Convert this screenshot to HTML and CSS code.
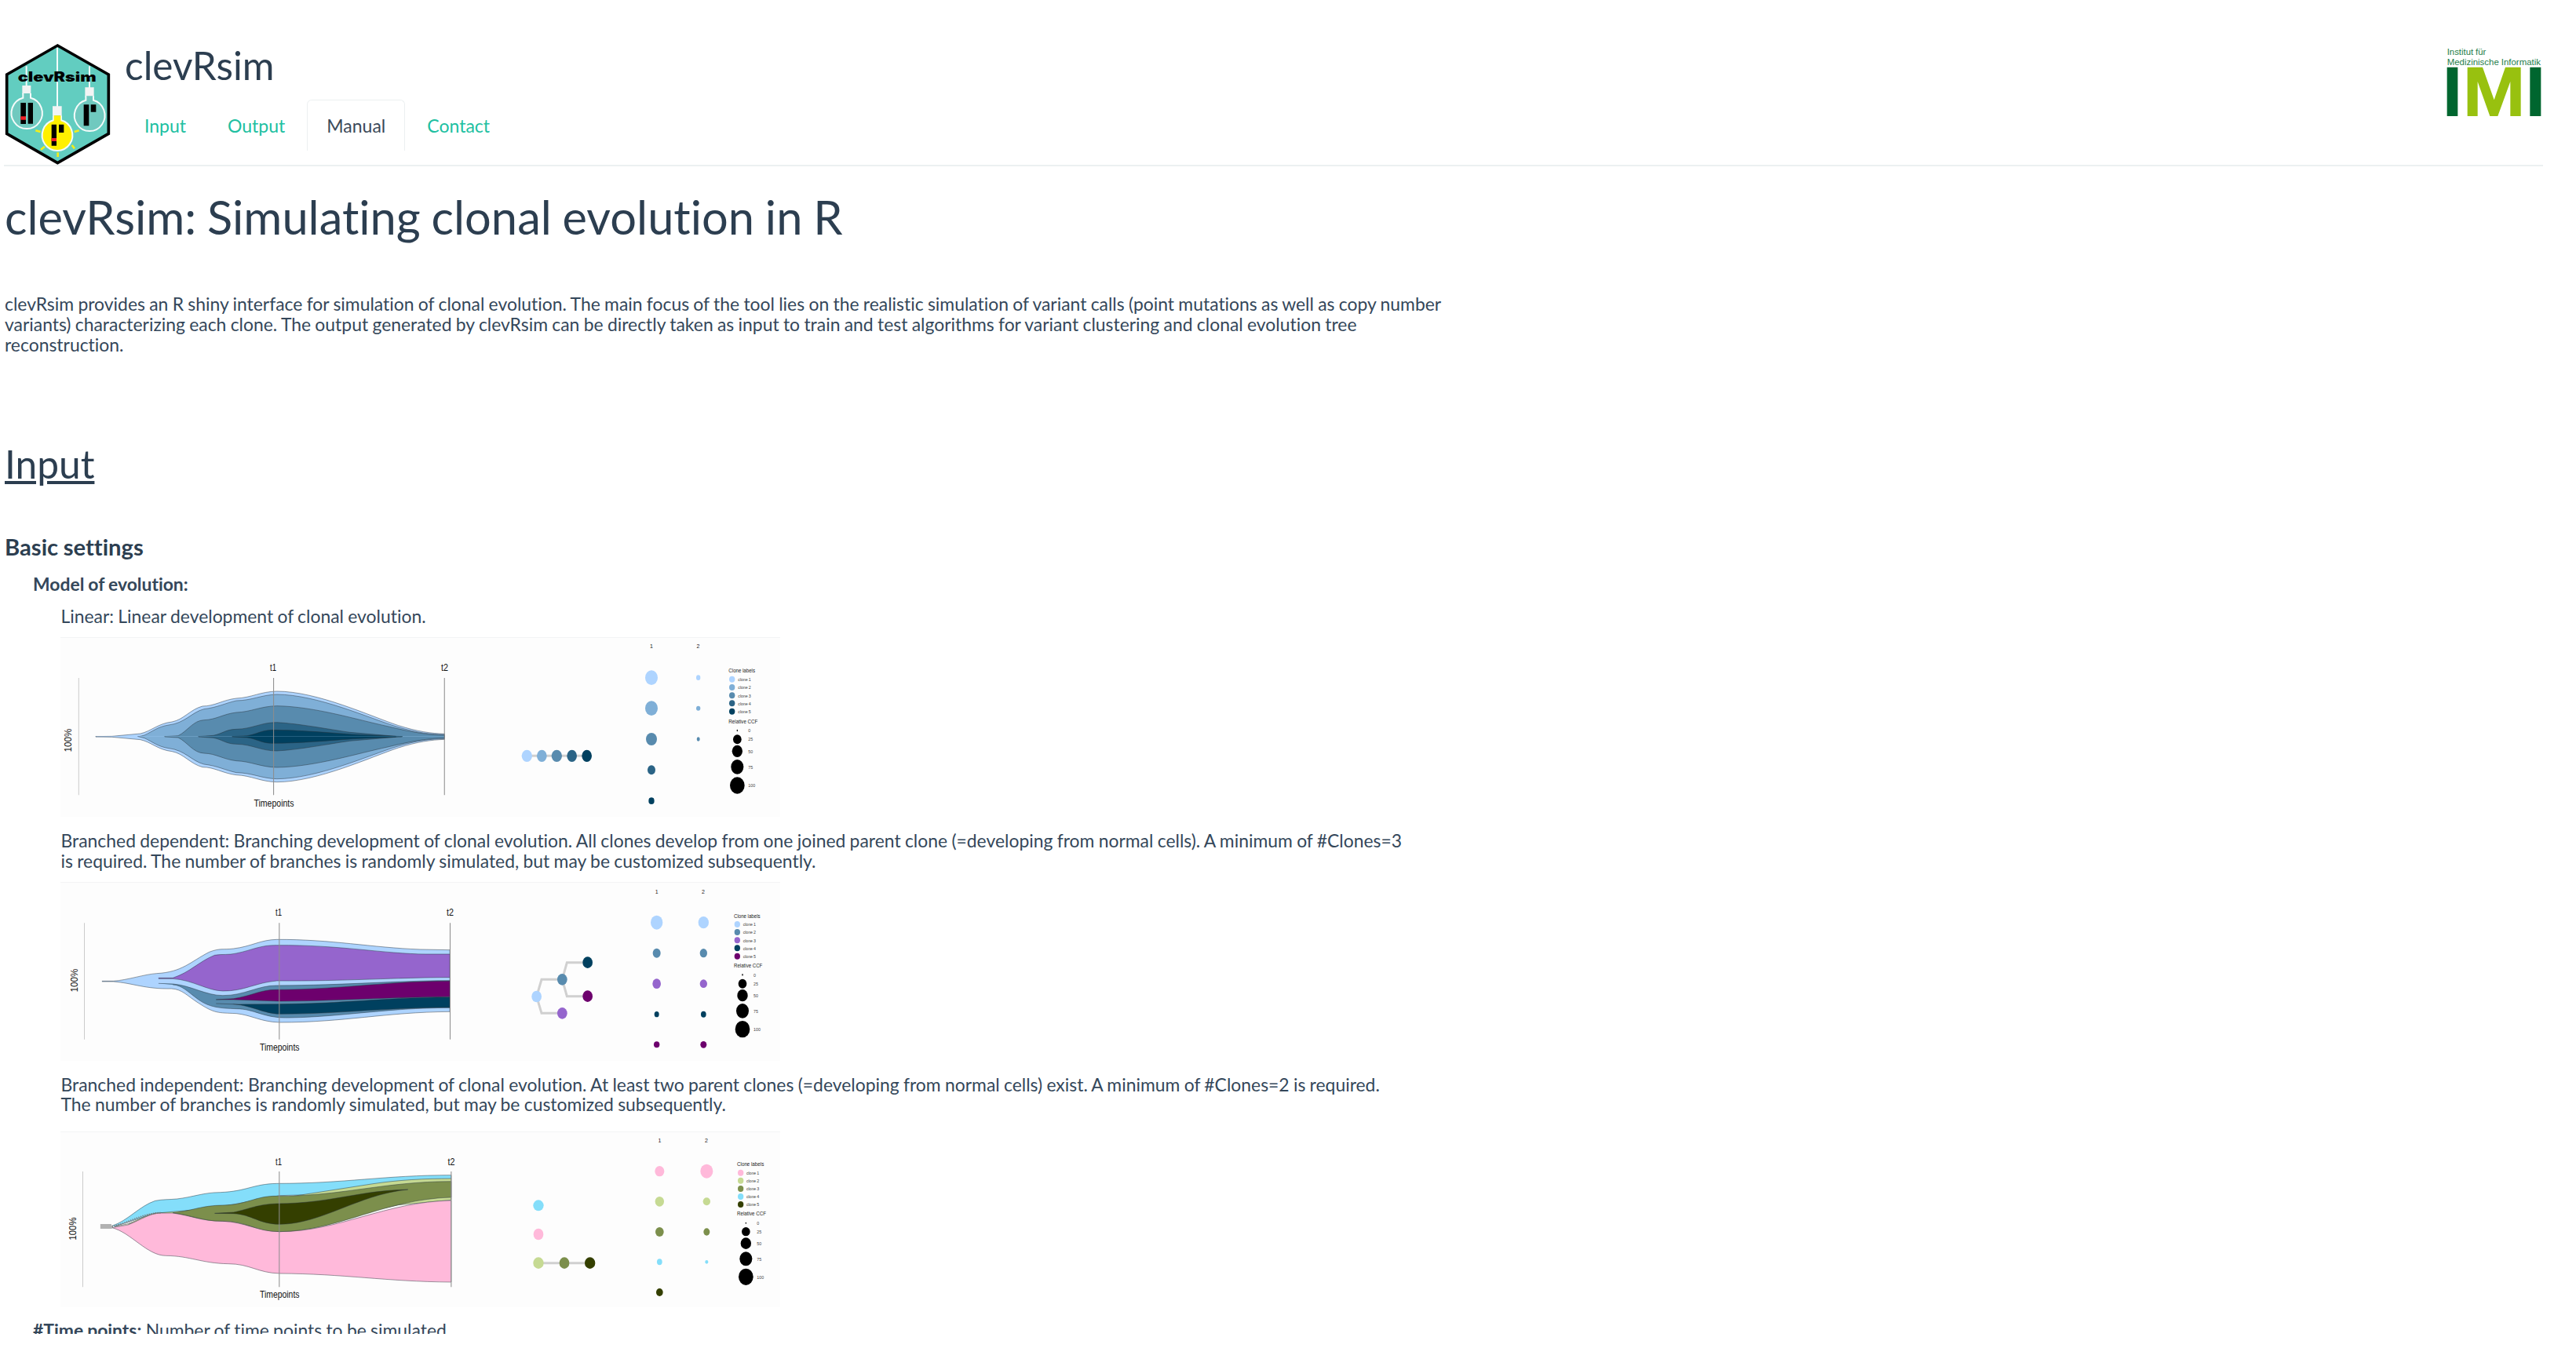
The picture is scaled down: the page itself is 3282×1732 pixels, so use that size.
FILE: index.html
```
<!DOCTYPE html>
<html lang="en">
<head>
<meta charset="utf-8">
<title>clevRsim</title>
<link rel="stylesheet" href="styles.css">
</head>
<body>
<div class="page">
<header class="header">
  <svg class="logo" viewBox="15 42 411 468" role="img" aria-label="clevRsim logo">
    <path d="M220 54 L415 165 V391 L220 503 L26 391 V165 Z" fill="#62cdc0" stroke="#000" stroke-width="11"/>
    <g stroke="#f4fbfa" stroke-width="6" fill="none">
      <path d="M101 133V210M219 62V290M342 133V218"/>
    </g>
    <g fill="#f2f4f4">
      <path d="M85 207h33v32H85zM325 214h34v36H325zM201 286h35v36H201z"/>
    </g>
    <g stroke="#f4fbfa" stroke-width="6">
      <path d="M88 237 V254 A59 60 0 1 0 117 254 V237" fill="#70c9bf"/>
      <path d="M328 247 V263 A58 60 0 1 0 357 263 V247" fill="#70c9bf"/>
      <path d="M204 322 V340 A58 59 0 1 0 234 340 V322" fill="#fff000"/>
    </g>
    <path d="M206 324h26v22h-26z" fill="#fff000"/>
    <path d="M79 273h20v81H79zM107 273h19v80h-19zM320 280h20v81h-20zM347 280h20v28h-20zM197 356h19v81h-19zM225 356h19v31h-19z" fill="#000"/>
    <path d="M79 325h20v13H79zM197 408h19v12h-19z" fill="#f02026"/>
    <path d="M136 379l19 5M302 379l-18 5M156 452l15-12M285 448l-10-13M221 463v17" stroke="#f2ee1b" stroke-width="8"/>
    <text class="logo-name" x="68" y="191" textLength="300" lengthAdjust="spacingAndGlyphs">clevRsim</text>
  </svg>
  <div class="brand">
    <h2 class="brand-title">clevRsim</h2>
    <nav class="tabs">
      <a class="tab">Input</a>
      <a class="tab">Output</a>
      <a class="tab tab-active">Manual</a>
      <a class="tab">Contact</a>
    </nav>
  </div>
  <svg class="imi" viewBox="108 60 372 270" role="img" aria-label="Institut für Medizinische Informatik">
    <text x="113" y="90" textLength="149" lengthAdjust="spacingAndGlyphs">Institut für</text>
    <text x="113" y="128" textLength="358" lengthAdjust="spacingAndGlyphs">Medizinische Informatik</text>
    <path d="M113 137h41v187h-41zM430 137h42v187h-42z" fill="#00662f"/>
    <path d="M191 324V137H249L293 262L336 137H395V324H355V192L307 324H277L230 192V324Z" fill="#98c10f"/>
  </svg>
</header>

<main class="manual">
  <h1>clevRsim: Simulating clonal evolution in R</h1>
  <p class="intro">clevRsim provides an R shiny interface for simulation of clonal evolution. The main focus of the tool lies on the realistic simulation of variant calls (point mutations as well as copy number<br>variants) characterizing each clone. The output generated by clevRsim can be directly taken as input to train and test algorithms for variant clustering and clonal evolution tree<br>reconstruction.</p>
  <h2 class="section">Input</h2>
  <h4>Basic settings</h4>
  <p class="setting"><b>Model of evolution:</b></p>

  <div class="models">
  <p>Linear: Linear development of clonal evolution.</p>
  <svg class="figure fig-linear" viewBox="77 813 917 228">
    <g transform="translate(60 800) scale(.34439 .33333)">
      <path d="M117 192V640" class="axis-light"/>
      <g id="linear-half" class="edge">
        <path fill="#aed4ff" d="M180 417.5V416L240 415L345 405C385 396 410 366 462 360C505 352 530 312 575 300C620 300 650 276 700 270C755 268 790 244 850 243C1000 243 1200 340 1300 374C1370 397 1420 404 1470 406V417.5"/>
        <path fill="#7fafd7" d="M335 417.5L360 411C390 397 410 378 450 372C510 365 535 323 580 311C630 305 660 288 700 279C760 278 790 257 850 255C1000 256 1190 345 1295 379C1370 402 1420 408 1470 408V417.5"/>
        <path fill="#588bae" d="M435 417.5V416L485 413C520 395 540 355 580 353C625 352 650 330 700 324C755 322 790 300 850 299C990 301 1150 353 1260 377C1350 400 1410 410 1470 411V417.5"/>
        <path fill="#2b6486" d="M560 417.5V416L615 412C650 405 660 389 700 388C760 387 790 362 850 362C930 366 1050 390 1120 400L1290 415V417.5"/>
        <path fill="#00405f" d="M685 417.5V416L740 413C775 408 790 393 830 391C930 391 1050 402 1130 408L1314 416V417.5"/>
      </g>
      <use href="#linear-half" transform="matrix(1 0 0 -1 0 833)"/>
      <path d="M838 192V640M1470 192V640" class="axis"/>
    </g>
    <g class="chart-label">
      <text x="344" y="855" textLength="8" lengthAdjust="spacingAndGlyphs">t1</text><text x="562" y="855" textLength="9" lengthAdjust="spacingAndGlyphs">t2</text>
      <text x="323.500" y="1028" textLength="51" lengthAdjust="spacingAndGlyphs">Timepoints</text>
      <text transform="translate(91 958.500) rotate(-90)" textLength="30" lengthAdjust="spacingAndGlyphs">100%</text>
    </g>
    <g transform="translate(600 800) scale(.33333)">
      <path class="branch" d="M214 490H443"/>
      <ellipse cx="214" cy="490" rx="20" ry="23" fill="#aed4ff"/><ellipse cx="271" cy="490" rx="19" ry="23" fill="#7fafd7"/><ellipse cx="328" cy="490" rx="20" ry="23" fill="#588bae"/><ellipse cx="386" cy="490" rx="19" ry="23" fill="#2b6486"/><ellipse cx="443" cy="490" rx="19" ry="23" fill="#00405f"/>
      <ellipse cx="690" cy="191" rx="24" ry="28" fill="#aed4ff"/><ellipse cx="690" cy="308" rx="24" ry="28" fill="#7fafd7"/><ellipse cx="690" cy="426" rx="21" ry="24" fill="#588bae"/><ellipse cx="690" cy="544" rx="15" ry="18" fill="#2b6486"/><ellipse cx="690" cy="662" rx="11" ry="13" fill="#00405f"/>
      <ellipse cx="869" cy="191" rx="8" ry="10" fill="#aed4ff"/><ellipse cx="869" cy="308" rx="8" ry="9" fill="#7fafd7"/><ellipse cx="869" cy="426" rx="6" ry="8" fill="#588bae"/>
      <g class="legend">
        <text class="col" x="690" y="79">1</text><text class="col" x="868" y="79">2</text>
        <text x="985" y="172" textLength="101" lengthAdjust="spacingAndGlyphs">Clone labels</text>
        <text x="985" y="365" textLength="111" lengthAdjust="spacingAndGlyphs">Relative CCF</text>
        <g class="small">
          <text x="1021" y="205" textLength="49">clone 1</text><text x="1021" y="235" textLength="49">clone 2</text><text x="1021" y="266" textLength="49">clone 3</text><text x="1021" y="296" textLength="49">clone 4</text><text x="1021" y="327" textLength="49">clone 5</text>
          <text x="1060" y="400">0</text><text x="1060" y="433">25</text><text x="1060" y="479">50</text><text x="1060" y="541">75</text><text x="1060" y="610">100</text>
        </g>
      </g>
      <ellipse cx="998" cy="197" rx="11" ry="12" fill="#aed4ff"/><ellipse cx="998" cy="228" rx="11" ry="12" fill="#7fafd7"/><ellipse cx="998" cy="259" rx="11" ry="12" fill="#588bae"/><ellipse cx="998" cy="289" rx="11" ry="12" fill="#2b6486"/><ellipse cx="998" cy="320" rx="11" ry="12" fill="#00405f"/>
      <ellipse cx="1018" cy="393" rx="2" ry="4"/><ellipse cx="1018" cy="427" rx="16" ry="18"/><ellipse cx="1018" cy="472" rx="20" ry="23"/><ellipse cx="1018" cy="532" rx="24" ry="28"/><ellipse cx="1018" cy="603" rx="28" ry="32"/>
    </g>
  </svg>

  <p>Branched dependent: Branching development of clonal evolution. All clones develop from one joined parent clone (=developing from normal cells). A minimum of #Clones=3<br>is required. The number of branches is randomly simulated, but may be customized subsequently.</p>
  <svg class="figure fig-dependent" viewBox="77 1126 917 227">
    <g transform="translate(60 1110) scale(.34439 .33333)">
      <path d="M138 202V647" class="axis-light"/>
      <g class="edge">
        <path fill="#aed4ff" d="M203 424H245C300 420 360 398 405 395C500 390 530 350 600 313C640 297 650 305 690 300C755 292 790 266 850 265C1050 264 1200 296 1380 303L1490 305V541C1250 543 1100 582 860 582C790 580 760 555 700 548C630 545 620 548 560 508C520 482 500 455 460 453C360 455 320 432 245 426H203"/>
        <path fill="#9565cd" d="M412 412L465 412C530 390 560 350 620 325C650 320 670 325 700 318C760 305 790 286 850 287C1080 285 1250 320 1400 321H1490V410C1300 410 1100 425 850 423C770 430 730 463 650 462C590 460 540 420 465 415H412"/>
        <path fill="#588bae" d="M412 433L465 435C530 440 590 480 650 479C730 480 780 440 850 441C1100 440 1300 422 1490 422V526C1250 527 1100 560 900 564C800 568 770 530 700 530C640 528 600 525 560 495C520 465 500 440 465 438"/>
        <path fill="#6d006d" d="M625 495L690 491C760 480 790 456 850 457C1100 455 1250 425 1490 424V484C1250 486 1050 501 860 501L690 495H625"/>
        <path fill="#00405f" d="M625 510L700 513L850 512C1100 511 1250 486 1490 486V525C1250 525 1080 550 860 550C800 548 760 518 690 512"/>
      </g>
      <path d="M859 202V647M1491 202V647" class="axis"/>
    </g>
    <g class="chart-label">
      <text x="351" y="1168" textLength="8" lengthAdjust="spacingAndGlyphs">t1</text><text x="569" y="1168" textLength="9" lengthAdjust="spacingAndGlyphs">t2</text>
      <text x="331" y="1339.500" textLength="50.500" lengthAdjust="spacingAndGlyphs">Timepoints</text>
      <text transform="translate(98.500 1265.500) rotate(-90)" textLength="30" lengthAdjust="spacingAndGlyphs">100%</text>
    </g>
    <g transform="translate(600 1110) scale(.33333)">
      <path class="branch" d="M349 547H270L251 483L270 418H349L367 353H446M349 418L367 482H446"/>
      <ellipse cx="251" cy="483" rx="19" ry="22" fill="#aed4ff"/><ellipse cx="349" cy="418" rx="19" ry="22" fill="#588bae"/><ellipse cx="446" cy="353" rx="19" ry="22" fill="#00405f"/><ellipse cx="446" cy="482" rx="19" ry="22" fill="#6d006d"/><ellipse cx="349" cy="547" rx="19" ry="22" fill="#9565cd"/>
      <ellipse cx="710" cy="200" rx="23" ry="27" fill="#aed4ff"/><ellipse cx="710" cy="317" rx="15" ry="18" fill="#588bae"/><ellipse cx="710" cy="434" rx="16" ry="19" fill="#9565cd"/><ellipse cx="710" cy="551" rx="9" ry="11" fill="#00405f"/><ellipse cx="710" cy="667" rx="11" ry="12" fill="#6d006d"/>
      <ellipse cx="889" cy="200" rx="20" ry="23" fill="#aed4ff"/><ellipse cx="889" cy="317" rx="14" ry="17" fill="#588bae"/><ellipse cx="889" cy="434" rx="14" ry="16" fill="#9565cd"/><ellipse cx="889" cy="551" rx="10" ry="12" fill="#00405f"/><ellipse cx="889" cy="667" rx="12" ry="13" fill="#6d006d"/>
      <g class="legend">
        <text class="col" x="710" y="90">1</text><text class="col" x="888" y="90">2</text>
        <text x="1005" y="182" textLength="101" lengthAdjust="spacingAndGlyphs">Clone labels</text>
        <text x="1005" y="373" textLength="109" lengthAdjust="spacingAndGlyphs">Relative CCF</text>
        <g class="small">
          <text x="1040" y="214" textLength="49">clone 1</text><text x="1040" y="244" textLength="49">clone 2</text><text x="1040" y="275" textLength="49">clone 3</text><text x="1040" y="305" textLength="49">clone 4</text><text x="1040" y="336" textLength="49">clone 5</text>
          <text x="1080" y="407">0</text><text x="1080" y="440">25</text><text x="1080" y="486">50</text><text x="1080" y="547">75</text><text x="1080" y="615">100</text>
        </g>
      </g>
      <ellipse cx="1018" cy="207" rx="11" ry="12" fill="#aed4ff"/><ellipse cx="1018" cy="237" rx="11" ry="12" fill="#588bae"/><ellipse cx="1018" cy="268" rx="11" ry="12" fill="#9565cd"/><ellipse cx="1018" cy="298" rx="11" ry="12" fill="#00405f"/><ellipse cx="1018" cy="329" rx="11" ry="12" fill="#6d006d"/>
      <ellipse cx="1038" cy="400" rx="2" ry="4"/><ellipse cx="1038" cy="434" rx="16" ry="18"/><ellipse cx="1038" cy="479" rx="20" ry="23"/><ellipse cx="1038" cy="538" rx="24" ry="28"/><ellipse cx="1038" cy="608" rx="28" ry="32"/>
    </g>
  </svg>

  <p>Branched independent: Branching development of clonal evolution. At least two parent clones (=developing from normal cells) exist. A minimum of #Clones=2 is required.<br>The number of branches is randomly simulated, but may be customized subsequently.</p>
  <svg class="figure fig-independent" viewBox="77 1444 917 223">
    <g transform="translate(60 1430) scale(.34439 .33333)">
      <path d="M132 192V634" class="axis-light"/>
      <g class="edge">
        <path fill="#84defa" d="M240 400C300 380 340 325 400 304C430 298 450 300 480 297C540 290 580 272 640 272C740 268 760 240 850 238C1100 238 1250 206 1495 206V220C1280 225 1080 285 860 284L690 318L465 350L400 352L250 402"/>
        <path fill="#c6da93" d="M250 403L300 392C350 372 380 350 420 350L640 330L1200 240C1300 224 1400 219 1495 219V301L1300 320L860 421L640 381L420 352L300 394"/>
        <path fill="#ffb9da" d="M240 407L300 396C350 375 380 352 420 351L465 351C540 362 570 382 650 382C730 385 780 421 860 422C1080 422 1250 308 1495 303V615C1250 613 1100 583 860 582C780 580 750 545 670 545C570 543 530 515 440 514C370 514 310 425 240 407"/>
        <path fill="#7c8f4c" d="M465 350C540 342 570 322 650 321C740 320 770 285 850 286C1080 288 1250 230 1495 230V291C1250 297 1080 420 860 422C770 422 740 382 650 382C570 382 540 360 465 350"/>
        <path fill="#343f00" d="M620 352L690 348C750 335 780 317 850 315C1050 314 1150 265 1335 261C1150 280 1020 392 860 394C780 392 760 357 690 353Z"/>
      </g>
      <path d="M197 396H238M197 402H240M197 408H240" stroke="#999" stroke-width="4"/>
      <path d="M240 402C300 392 350 352 420 350" fill="none" stroke="#777" stroke-width="6" stroke-dasharray="4 4"/>
      <path d="M859 192V634M1495 192V634" class="axis"/>
    </g>
    <g class="chart-label">
      <text x="351" y="1485.500" textLength="8" lengthAdjust="spacingAndGlyphs">t1</text><text x="570.500" y="1485.500" textLength="9" lengthAdjust="spacingAndGlyphs">t2</text>
      <text x="331" y="1655" textLength="50.500" lengthAdjust="spacingAndGlyphs">Timepoints</text>
      <text transform="translate(96.500 1581.500) rotate(-90)" textLength="29" lengthAdjust="spacingAndGlyphs">100%</text>
    </g>
    <g transform="translate(600 1430) scale(.33333)">
      <path class="branch" d="M258 542H455"/>
      <ellipse cx="258" cy="322" rx="20" ry="21" fill="#84defa"/><ellipse cx="258" cy="432" rx="19" ry="22" fill="#ffb9da"/><ellipse cx="258" cy="542" rx="20" ry="22" fill="#c6da93"/><ellipse cx="357" cy="542" rx="19" ry="22" fill="#7c8f4c"/><ellipse cx="455" cy="542" rx="20" ry="22" fill="#343f00"/>
      <ellipse cx="721" cy="191" rx="18" ry="20" fill="#ffb9da"/><ellipse cx="721" cy="307" rx="17" ry="19" fill="#c6da93"/><ellipse cx="721" cy="423" rx="16" ry="18" fill="#7c8f4c"/><ellipse cx="721" cy="538" rx="10" ry="12" fill="#84defa"/><ellipse cx="721" cy="654" rx="13" ry="15" fill="#343f00"/>
      <ellipse cx="901" cy="191" rx="24" ry="27" fill="#ffb9da"/><ellipse cx="901" cy="307" rx="14" ry="15" fill="#c6da93"/><ellipse cx="901" cy="423" rx="12" ry="14" fill="#7c8f4c"/><ellipse cx="901" cy="538" rx="6" ry="7" fill="#84defa"/>
      <g class="legend">
        <text class="col" x="721" y="81">1</text><text class="col" x="900" y="81">2</text>
        <text x="1017" y="172" textLength="103" lengthAdjust="spacingAndGlyphs">Clone labels</text>
        <text x="1017" y="361" textLength="111" lengthAdjust="spacingAndGlyphs">Relative CCF</text>
        <g class="small">
          <text x="1053" y="204" textLength="49">clone 1</text><text x="1053" y="234" textLength="49">clone 2</text><text x="1053" y="265" textLength="49">clone 3</text><text x="1053" y="295" textLength="49">clone 4</text><text x="1053" y="325" textLength="49">clone 5</text>
          <text x="1093" y="396">0</text><text x="1093" y="429">25</text><text x="1093" y="474">50</text><text x="1093" y="533">75</text><text x="1093" y="602">100</text>
        </g>
      </g>
      <ellipse cx="1031" cy="197" rx="11" ry="12" fill="#ffb9da"/><ellipse cx="1031" cy="227" rx="11" ry="12" fill="#c6da93"/><ellipse cx="1031" cy="258" rx="11" ry="12" fill="#7c8f4c"/><ellipse cx="1031" cy="288" rx="11" ry="12" fill="#84defa"/><ellipse cx="1031" cy="318" rx="11" ry="12" fill="#343f00"/>
      <ellipse cx="1051" cy="389" rx="2" ry="3"/><ellipse cx="1051" cy="422" rx="16" ry="17"/><ellipse cx="1051" cy="467" rx="20" ry="22"/><ellipse cx="1051" cy="526" rx="24" ry="27"/><ellipse cx="1051" cy="595" rx="28" ry="32"/>
    </g>
  </svg>
  </div>
  <p class="setting"><b>#Time points:</b> Number of time points to be simulated.</p>
</main>
</div>
</body>
</html>
```
FILE: styles.css
```
* { box-sizing: border-box; }

body {
  margin: 0;
  background: #fff;
  color: #2c3e50;
  font: 22.9px/25.9px Lato, sans-serif;
  font-variant-ligatures: none;
  word-spacing: -.55px;
}

.page {
  height: 1700px;
  padding: 0 42px 0 5px;
  overflow: hidden;
}

h1, h2, h4, p { margin: 0; font-weight: 400; white-space: nowrap; }
p { color: #34475a; }

/* Header */
.header {
  display: flex;
  align-items: flex-start;
  height: 212px;
  padding-top: 54px;
  border-bottom: 2px solid #ecf0f1;
}
.logo { width: 137px; height: 156px; flex: none; }
.logo-name { font: 900 50px Inter, "Liberation Sans", sans-serif; }
.brand { margin-left: 17px; padding-top: 2px; }
.brand-title { font-size: 49.5px; line-height: 54px; }
.tabs { display: flex; gap: 3px; margin-top: 17px; }
.tab {
  height: 65px;
  padding: 16px 24px;
  border: 1.5px solid transparent;
  border-bottom: 0;
  border-radius: 6px 6px 0 0;
  color: #20bfa1;
  font-size: 23px;
  line-height: 32.4px;
}
.tab-active { border-color: #ecf0f1; color: #3c4a5a; }
.imi {
  width: 124px;
  height: 90px;
  margin: 6px 0 0 auto;
  font: 30px "Liberation Sans", sans-serif;
  fill: #1e7d4a;
}

/* Manual */
.manual { padding-left: 1px; }
.manual h1 { margin-top: 34px; font-size: 59.6px; line-height: 60px; word-spacing: -1.5px; }
.intro { margin-top: 69px; }
.section { margin-top: 111px; font-size: 49.6px; line-height: 54px; text-decoration: underline; }
.manual h4 { margin-top: 63px; font-size: 29.2px; font-weight: 700; line-height: 32px; }
.setting { margin: 19px 0 0 36px; }
.models { padding: 15px 0 0 71px; }
.models p { padding-left: .5px; }
.figure { display: block; width: 917px; margin-top: 14.3px; background: #fdfdfd; box-shadow: 0 -1px #f3f4f5; }
.fig-linear { height: 228px; margin-bottom: 18.3px; }
.fig-dependent { height: 227px; margin-bottom: 17.300px; }
.fig-independent { height: 223px; margin-top: 21.5px; }
.models + .setting { margin-top: 17px; }

/* Charts */
.edge { stroke: #26323b; stroke-opacity: .55; stroke-width: 2.5; }
.axis, .axis-light { fill: none; stroke: #8d8d8d; stroke-width: 3; }
.axis-light { stroke: #ccc; }
.branch { fill: none; stroke: #d0d0d0; stroke-width: 9; }
.chart-label { font: 12.500px "Liberation Sans", sans-serif; fill: #111; word-spacing: 0; }
.legend { font: 21px "Liberation Sans", sans-serif; fill: #222; }
.legend .col { text-anchor: middle; }
.legend .small { font-size: 16px; fill: #444; }
```
